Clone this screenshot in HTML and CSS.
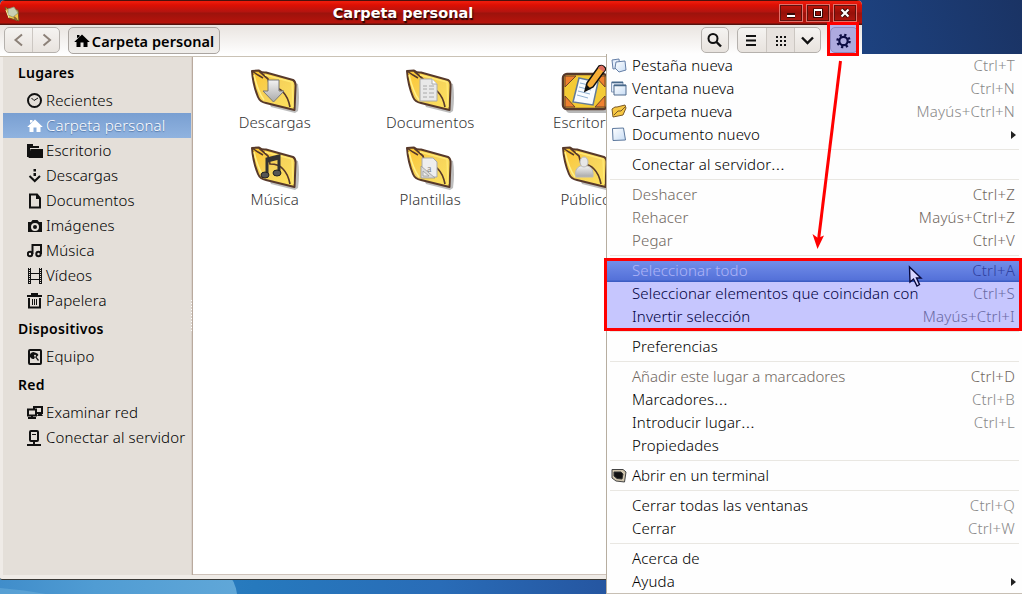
FILE: index.html
```
<!DOCTYPE html>
<html lang="es">
<head>
<meta charset="utf-8">
<title>Carpeta personal</title>
<link rel="stylesheet" href="styles.css">
</head>
<body>
<svg class="defs" width="0" height="0" aria-hidden="true">
  <defs>
    <linearGradient id="gold" x1="0" y1="0" x2="1" y2="1"><stop offset="0" stop-color="#ffc62c"/><stop offset=".5" stop-color="#f6d35b"/><stop offset="1" stop-color="#ffe45c"/></linearGradient>
    <linearGradient id="silver" x1="0" y1="0" x2="0" y2="1"><stop offset="0" stop-color="#f3f3f3"/><stop offset="1" stop-color="#a9a9a9"/></linearGradient>
    <linearGradient id="paper" x1="0" y1="0" x2="1" y2="1"><stop offset="0" stop-color="#fff"/><stop offset="1" stop-color="#c7dcf4"/></linearGradient>
    <symbol id="folder" viewBox="0 0 50 46">
      <path d="M6 5L14 4L48 15Q50 27 48 42L45 44L21 38z" fill="#999" opacity=".65"/>
      <path d="M2 2L9 1.500Q12 4 16 3.500L43 11Q46 12.500 45.500 18L44.500 41L16 34Q10 33 8 28Q3 16 2 2z" fill="url(#gold)" stroke="#57392a" stroke-width="2" stroke-linejoin="round"/>
      <path d="M2 2L8 6L13 9" fill="none" stroke="#57392a" stroke-width="1.500"/>
      <path d="M9 2L18 10L20 18Q29 18 33 23Q38 28 40 38" fill="none" stroke="#57392a" stroke-width="1.700"/>
      <path d="M4 6Q8 23 14 31" fill="none" stroke="#fff08a" stroke-width="1.500"/>
      <path d="M15 6L42 13L43 38" fill="none" stroke="#ffe976" stroke-width="1.300"/>
    </symbol>
    <symbol id="home" viewBox="0 0 16 16"><path d="M8 1.500L15.800 9H13.500V14H9.500V9.500H6.500V14H2.500V9H.2z" fill="currentColor"/><path d="M3 5V2H5.500V4" fill="currentColor"/></symbol>
  </defs>
</svg>
<main class="desktop">
  <svg class="wallpaper" viewBox="0 0 1022 594" aria-hidden="true">
    <defs><linearGradient id="sky"><stop offset="0" stop-color="#3588c5"/><stop offset=".25" stop-color="#2679bd"/><stop offset=".43" stop-color="#296cb7"/><stop offset=".6" stop-color="#2555a0"/><stop offset="1" stop-color="#18356a"/></linearGradient>
    <linearGradient id="beam"><stop offset="0" stop-color="#408dca"/><stop offset=".4" stop-color="#509cd3"/><stop offset="1" stop-color="#60a7d8"/></linearGradient>
    <linearGradient id="top" gradientUnits="userSpaceOnUse" x1="860" y1="50" x2="1022" y2="0"><stop offset="0" stop-color="#1d4280"/><stop offset="1" stop-color="#1a3364"/></linearGradient></defs>
    <path d="M0 0H1022V594H0z" fill="url(#sky)"/><path d="M0 0H1022V60H0z" fill="url(#top)"/>
    <path d="M0 575H228Q235 580 237 594H0z" fill="url(#beam)"/><path d="M0 588Q25 590 46 594H0z" fill="#6eb2de" opacity=".5"/>
  </svg>
  <section class="window">
    <header class="titlebar">
      <svg class="app-icon" viewBox="0 0 16 16"><path d="M1 1L4 3L14 4L15 15L5 12z" fill="#f3ca4a" stroke="#725022"/><path d="M4 3L10 1L14 7L9 11L4 9z" fill="#c9d0b3" stroke="#88936e" stroke-width=".7"/><path d="M10 11L13 14" stroke="#8b6735" stroke-width="2"/><path d="M2 4L5 12" stroke="#fff4a0"/></svg>
      <h1 class="title">Carpeta personal</h1>
      <div class="window-buttons">
        <button class="wm"><svg viewBox="0 0 22 18"><path d="M7 11.500H15" stroke="#350806" stroke-width="5"/><path d="M7 12H15" stroke="#fff" stroke-width="2"/></svg></button>
        <button class="wm"><svg viewBox="0 0 22 18"><path d="M7.500 6H14.500V12.500H7.500z" fill="none" stroke="#350806" stroke-width="3"/><path d="M7.500 5.500H14.500V12.500H7.500z" fill="none" stroke="#fff"/><path d="M7 6H15" stroke="#fff" stroke-width="2"/></svg></button>
        <button class="wm"><svg viewBox="0 0 22 18"><path d="M7.500 5.500L14.500 12.500M14.500 5.500L7.500 12.500" stroke="#350806" stroke-width="4"/><path d="M7.500 5.500L14.500 12.500M14.500 5.500L7.500 12.500" stroke="#fff" stroke-width="2.200"/></svg></button>
      </div>
    </header>
    <nav class="toolbar">
      <div class="group nav-group"><button class="tool"><svg viewBox="0 0 27 24"><path d="M17 6.500L10.500 12L17 17.500" class="muted"/></svg></button><button class="tool"><svg viewBox="0 0 27 24"><path d="M10.500 6.500L17 12L10.500 17.500" class="muted"/></svg></button></div>
      <button class="path"><svg class="path-icon"><use href="#home"/></svg><span>Carpeta personal</span></button>
      <div class="group search"><button class="tool"><svg viewBox="0 0 28 24"><circle cx="12" cy="10.500" r="4.500" class="line"/><path d="M15.500 14L20 18.500" class="line thick"/></svg></button></div>
      <div class="group views"><button class="tool"><svg viewBox="0 0 28 24"><path d="M8 8H18M8 12.500H18M8 17H18" class="line"/></svg></button><button class="tool pressed"><svg viewBox="0 0 28 24"><path d="M9 9H19M9 13H19M9 17H19" class="dots"/></svg></button><button class="tool"><svg viewBox="0 0 28 24"><path d="M7 9.500L12.500 15L18 9.500" class="line thick"/></svg></button></div>
      <div class="group settings"><button class="tool"><svg viewBox="0 0 28 24"><circle cx="13.500" cy="13" r="6" fill="none" stroke="#111" stroke-width="2.500" stroke-dasharray="2.200 2.512"/><circle cx="13.500" cy="13" r="4.200" fill="none" stroke="#111" stroke-width="2.200"/></svg></button></div>
    </nav>
    <div class="body">
      <aside class="sidebar">
        <h2>Lugares</h2>
        <a class="place"><svg viewBox="0 0 16 16"><circle cx="7.500" cy="7.500" r="6.500" class="line"/><path d="M4.500 5L7 7.500L11 5" class="line thin"/></svg><span>Recientes</span></a>
        <a class="place active"><svg viewBox="0 0 16 16"><use href="#home"/></svg><span>Carpeta personal</span></a>
        <a class="place"><svg viewBox="0 0 16 16"><path d="M0 1H6V3H12V5H3V14H0z" fill="#111"/><path d="M3.500 6H16V15H1.500z" fill="#111"/></svg><span>Escritorio</span></a>
        <a class="place"><svg viewBox="0 0 16 16"><path d="M6.500 1H9V3.500H6.500zM6.500 5H9V8H6.500z" fill="#111"/><path d="M2.500 8L7.750 13L13 8" class="line"/></svg><span>Descargas</span></a>
        <a class="place"><svg viewBox="0 0 16 16"><path d="M3 1.500H10L13 5V14.500H3z" class="line"/><path d="M9 1V6H14" fill="#111"/></svg><span>Documentos</span></a>
        <a class="place"><svg viewBox="0 0 16 16"><path fill-rule="evenodd" d="M1 4H4L5.500 2H10.500L12 4H15V14H1zM8 5A4 4 0 1 0 8 13A4 4 0 1 0 8 5z" fill="#111"/><circle cx="8" cy="9" r="2" fill="#111"/></svg><span>Imágenes</span></a>
        <a class="place"><svg viewBox="0 0 16 16"><circle cx="3" cy="11" r="2.200" class="line"/><circle cx="11.500" cy="11" r="2.200" class="line"/><path d="M5.500 11V2H14V11" class="line"/></svg><span>Música</span></a>
        <a class="place"><svg viewBox="0 0 16 16"><path d="M2.500 0V16M13.500 0V16" class="film"/><path d="M2.500 0V16M13.500 0V16" class="holes"/><path d="M4 5.500H12M4 11.500H12" stroke="#111"/></svg><span>Vídeos</span></a>
        <a class="place"><svg viewBox="0 0 16 16"><path d="M0 3H15M4 1H11M2 5V14.500H13V5" class="line"/><path d="M5.500 6V12M7.500 6V12M9.500 6V12" stroke="#111"/></svg><span>Papelera</span></a>
        <h2>Dispositivos</h2>
        <a class="place"><svg viewBox="0 0 16 16"><rect x="2" y="1" width="12" height="14" rx="1" class="line"/><path d="M8 3.500A3.500 3.500 0 1 0 7 10L8 8L11 12L12 11L9.500 8L11.500 6Q11 4 8 3.500z" fill="#111"/><circle cx="8" cy="6.700" r="1" fill="#e4dfd9"/></svg><span>Equipo</span></a>
        <h2>Red</h2>
        <a class="place"><svg viewBox="0 0 16 16"><path d="M1 4.500H9V10.500H1zM5 11V14M1 13H9M7 4V2H15V8H10" class="line"/><path d="M10 11H16L14 8H12z" fill="#111"/></svg><span>Examinar red</span></a>
        <a class="place"><svg viewBox="0 0 16 16"><rect x="3" y="1" width="8" height="10" rx="1" class="line"/><path d="M7 11V15M0 15H14" class="line"/><path d="M5 4.500H9" stroke="#111"/></svg><span>Conectar al servidor</span></a>
      </aside>
      <div class="grip"></div>
      <section class="files">
        <figure class="file"><svg viewBox="0 0 50 46"><use href="#folder"/><path d="M18 11H29V22H34L23.500 33L13 22H18z" fill="url(#silver)" stroke="#777"/></svg><figcaption>Descargas</figcaption></figure>
        <figure class="file"><svg viewBox="0 0 50 46"><use href="#folder"/><path d="M15 10H27L32 15V32H15z" fill="#e9e9e9" stroke="#aaa"/><path d="M27 10V15H32" fill="#fff" stroke="#aaa"/><path d="M18 17H22M24 17H29M18 20H22M24 20H29M18 24H22M24 24H29M18 28H22M24 28H29" stroke="#aaa"/></svg><figcaption>Documentos</figcaption></figure>
        <figure class="file"><svg viewBox="0 0 50 46"><rect x="5" y="9" width="44" height="35" rx="4" fill="#999" opacity=".7"/><rect x="2" y="5" width="44" height="35" rx="4" fill="#f4cb35" stroke="#57392a" stroke-width="2.500"/><path d="M4 7H15L4 18zM44 7H34L44 18zM4 38H14L4 27zM44 38H34L44 27z" fill="#ef812e" stroke="#70452b"/><path d="M18 9L37 13L32 36L12 33z" fill="#f9fcff" stroke="#647b96" stroke-width="1.500"/><path d="M19 14L32 17M18 18L30 21M17 22L29 25M16 26L27 29" stroke="#8caed0"/><path d="M26 14L38-3Q42-5 45 0L32 18L24 22z" fill="#f7ae37" stroke="#111" stroke-width="1.500"/><path d="M37-1L39-3Q42-5 44 0L43 3z" fill="#de6c60"/><path d="M24 22L29 19L26 16z" fill="#111"/></svg><figcaption>Escritorio</figcaption></figure>
        <figure class="file"><svg viewBox="0 0 50 46"><use href="#folder"/><path d="M17 29V13L29 10V27" fill="none" stroke="#333" stroke-width="3"/><path d="M17 15L29 12" stroke="#333" stroke-width="3"/><ellipse cx="15" cy="29" rx="4" ry="3" fill="#555" stroke="#222"/><ellipse cx="27" cy="27" rx="4" ry="3" fill="#555" stroke="#222"/></svg><figcaption>Música</figcaption></figure>
        <figure class="file"><svg viewBox="0 0 50 46"><use href="#folder"/><path d="M17 12H28L32 16V31H17z" fill="#eee" stroke="#aaa"/><text x="22" y="26" class="template-letter">a</text><path d="M16 20L30 32H16zM18 25L24 30H18z" fill="#d9d9d9" stroke="#999" stroke-width=".8" fill-rule="evenodd"/></svg><figcaption>Plantillas</figcaption></figure>
        <figure class="file"><svg viewBox="0 0 50 46"><use href="#folder"/><path d="M19 20H27Q33 22 32 31H15Q13 23 19 20z" fill="url(#silver)" stroke="#bbb"/><ellipse cx="23" cy="16" rx="4" ry="5" fill="#e7e7e7" stroke="#bbb"/></svg><figcaption>Público</figcaption></figure>
      </section>
    </div>
  </section>

  <section class="menu">
    <div class="row"><svg viewBox="0 0 16 16"><path d="M1 2L8 1L9 10L2 11z" fill="#e4edfa" stroke="#657fa7"/><path d="M5 4L14 3L15 12L8 14L4 10z" fill="url(#paper)" stroke="#657fa7"/></svg><span>Pestaña nueva</span><kbd>Ctrl+T</kbd></div>
    <div class="row"><svg viewBox="0 0 16 16"><path d="M.5 1H12V11H.5z" fill="#e4edfa" stroke="#879bb9"/><path d="M3 4H15V14H3z" fill="url(#paper)" stroke="#536c8e"/><path d="M1 1.500H12M3 4.500H15" stroke="#476889" stroke-width="1.500"/></svg><span>Ventana nueva</span><kbd>Ctrl+N</kbd></div>
    <div class="row"><svg viewBox="0 0 16 16"><path d="M1 5L4 3L6 3L14 1L15 4L12 11L2 13z" fill="#f6c742" stroke="#795828" stroke-linejoin="round"/><path d="M3 11L7 7L10 7L14 3" fill="none" stroke="#795828"/></svg><span>Carpeta nueva</span><kbd>Mayús+Ctrl+N</kbd></div>
    <div class="row"><svg viewBox="0 0 16 16"><path d="M1.500 1.500L12.500 1L14.500 13L2 13.500z" fill="url(#paper)" stroke="#5c789d" stroke-linejoin="round"/></svg><span>Documento nuevo</span><b class="submenu"></b></div>
    <hr>
    <div class="row"><span>Conectar al servidor<i class="dots-text">…</i></span></div>
    <hr>
    <div class="row disabled"><span>Deshacer</span><kbd>Ctrl+Z</kbd></div>
    <div class="row disabled"><span>Rehacer</span><kbd>Mayús+Ctrl+Z</kbd></div>
    <div class="row disabled"><span>Pegar</span><kbd>Ctrl+V</kbd></div>
    <hr>
    <div class="row selected"><span>Seleccionar todo</span><kbd>Ctrl+A</kbd></div>
    <div class="row"><span>Seleccionar elementos que coincidan con</span><kbd>Ctrl+S</kbd></div>
    <div class="row"><span>Invertir selección</span><kbd>Mayús+Ctrl+I</kbd></div>
    <hr>
    <div class="row"><span>Preferencias</span></div>
    <hr>
    <div class="row disabled"><span class="snug">Añadir este lugar a marcadores</span><kbd>Ctrl+D</kbd></div>
    <div class="row"><span>Marcadores<i class="dots-text">…</i></span><kbd>Ctrl+B</kbd></div>
    <div class="row"><span>Introducir lugar<i class="dots-text">…</i></span><kbd>Ctrl+L</kbd></div>
    <div class="row"><span>Propiedades</span></div>
    <hr>
    <div class="row"><svg viewBox="0 0 16 16"><path d="M1 1.500L12 1.500L15 4L13.500 14L5 13L1 10z" fill="#d0c5ad" stroke="#444"/><path d="M3 4L10 4L12 6L11 11L6 10.500L3 8z" fill="#111" stroke="#333"/></svg><span class="snug">Abrir en un terminal</span></div>
    <hr>
    <div class="row"><span>Cerrar todas las ventanas</span><kbd>Ctrl+Q</kbd></div>
    <div class="row"><span>Cerrar</span><kbd>Ctrl+W</kbd></div>
    <hr>
    <div class="row"><span>Acerca de</span></div>
    <div class="row"><span>Ayuda</span><b class="submenu"></b></div>
  </section>
  <div class="marker gear-marker"></div>
  <div class="marker menu-marker"></div>
  <svg class="annotations" viewBox="0 0 1022 594" aria-hidden="true"><path d="M840.500 61L818.500 240" stroke="red" stroke-width="3"/><path d="M812.500 234L818 238L824 235.500L817.500 249z" fill="red"/><path d="M909.500 267L910 282L913.500 279L917 286L919.500 284.500L916.500 278H921z" fill="#d8d5ff" stroke="#08083c" stroke-width="1.400"/></svg>
</main>
</body>
</html>
```

FILE: styles.css
```
* { box-sizing: border-box; }
body { margin: 0; overflow: hidden; font: 300 15px/23px "Noto Sans", "Open Sans", sans-serif; letter-spacing: .14px; color: #000; }
button { border: 0; padding: 0; background: none; font: inherit; color: inherit; display: flex; align-items: center; justify-content: center; }
svg { flex: none; }
.defs, .wallpaper, .annotations { position: absolute; }
.desktop { position: relative; width: 1022px; height: 594px; overflow: hidden; }
.wallpaper { top: 0; left: 0; width: 1022px; height: 594px; }
.window { position: relative; display: flex; flex-direction: column; width: 862px; height: 580px; background: #efebe7; border-bottom: 1px solid #3a3936; border-radius: 5px 5px 2px 2px; overflow: hidden; }

.titlebar { height: 25px; flex: none; display: flex; align-items: center; padding: 0 5px 0 4px; background: linear-gradient(#4a110d 0 1px, #ed1b0b 1px 2px, #dc1004 5px, #b31410 12px, #9c130c 13px, #b8130b 23px, #54120d 24px); }
.app-icon { width: 16px; height: 16px; margin-top: 2px; }
.title { flex: 1; margin: 0; padding-left: 7px; text-align: center; font: bold 14.5px/22px "DejaVu Sans", sans-serif; letter-spacing: 0; color: #fff; text-shadow: 1px 2px 1px #250605; }
.window-buttons { display: flex; gap: 3px; }
.wm { width: 24px; height: 18px; border: 1px solid #e2716a; box-shadow: inset 0 0 0 1px #5e120d; background: linear-gradient(#c31409, #951009 50%, #af160e); }
.wm svg { width: 22px; height: 18px; }

.toolbar { height: 32px; flex: none; display: flex; align-items: flex-start; padding: 2px 4px 0; background: linear-gradient(#e9e4e0, #fff 30px); border-bottom: 1px solid #cac2b5; }
.group { display: flex; height: 26px; border: 1px solid #b5b1ad; border-radius: 5px; background: linear-gradient(#f5f3f1, #e8e3de); overflow: hidden; }
.tool { width: 28px; height: 24px; }
.tool + .tool { border-left: 1px solid #ccc7c2; }
.tool svg { width: 28px; height: 24px; }
.nav-group .tool { width: 27px; }
.nav-group .tool svg { width: 27px; }
.path { height: 27px; width: 152px; margin-left: 8px; padding-top: 1px; gap: 2px; border: 1px solid #aaa5a1; border-radius: 5px; background: linear-gradient(#e3deda, #f0eeeb); font-weight: 600; font-size: 14.5px; letter-spacing: .05px; white-space: nowrap; }
.path-icon { width: 16px; height: 16px; }
.search { margin-left: auto; }
.search .tool { width: 26px; }
.views { margin-left: 8px; width: 84px; }
.pressed { background: #e7e2de; }
.settings { margin-left: 9px; width: 28px; background: #dedad7; }
.settings .tool { margin-left: -1px; }
.muted { fill: none; stroke: #8c8178; stroke-width: 2; }
.line { fill: none; stroke: #111; stroke-width: 2; }
.thick { stroke-width: 2.4; }
.thin { stroke-width: 1; }
.dots { stroke: #111; stroke-width: 2; stroke-dasharray: 2 2; }
.film { stroke: #111; stroke-width: 3; }
.holes { stroke: #e4dfd9; stroke-dasharray: 1 1; }

.body { flex: 1; display: flex; padding: 0 4px 4px 3px; min-height: 0; }
.sidebar { width: 188px; background: #e4dfd9; }
.sidebar h2 { margin: 0; height: 31px; padding: 0 0 0 15px; font-size: 14px; font-weight: 600; letter-spacing: .3px; line-height: 32px; }
.place { display: flex; align-items: center; height: 25px; padding-left: 24px; gap: 3px; white-space: nowrap; }
.place svg { width: 16px; height: 16px; }
.place.active { color: #fff; background: linear-gradient(#799fd2, #90b3df); text-shadow: 0 1px 1px #5274a5; }
.grip { width: 2px; background: repeating-linear-gradient(#fff 0 1px, transparent 1px 3px) 0 243px / 1px 32px no-repeat, linear-gradient(90deg, #d9d1ca 50%, #b9aa9e 50%); }
.files { flex: 1; background: #fff; border-bottom: 1px solid #cec3bb; display: grid; grid-template-columns: repeat(3, 155.500px); grid-auto-rows: 77px; padding-top: 12px; padding-left: 4px; overflow: hidden; align-content: start; }
.file { margin: 0; display: flex; flex-direction: column; align-items: center; color: #333; }
.file svg { width: 50px; height: 43px; overflow: visible; }
.file svg { height: 46px; margin-bottom: -3px; }
.file figcaption { line-height: 21px; }
.template-letter { font: 10px "Liberation Serif", serif; fill: #888; }

.menu { position: absolute; top: 54px; left: 606px; width: 416px; height: 540px; background: #fefefe; border-left: 1px solid #b7aea0; border-bottom: 1px solid #c7bfb4; }
.row { height: 23px; display: flex; align-items: center; position: relative; padding: 0 7px 0 4px; white-space: nowrap; }
.row svg { width: 16px; height: 16px; margin-right: 5px; }
.row span:first-child { margin-left: 21px; }
.row kbd { font: inherit; letter-spacing: .2px; margin-left: auto; color: #888; }
.snug { letter-spacing: 0; }
.dots-text { font-style: normal; letter-spacing: 0; display: inline-block; transform: scaleX(1.25); transform-origin: left; }
.menu hr { height: 1px; border: 0; margin: 3px 3px; background: #e9e7e2; }
.disabled, .disabled kbd { color: #70675f; }
.selected { background: linear-gradient(#97bae6, #6c91ce 21px, #4d77b3 22px); color: #dfe5f5; }
.selected kbd { color: #3e5383; }
.submenu { margin-left: auto; margin-right: -1px; border-left: 5px solid #222; border-top: 4px solid transparent; border-bottom: 4px solid transparent; }
.marker { position: absolute; border: 3px solid red; background: rgba(0, 0, 255, .22); }
.gear-marker { left: 827px; top: 22px; width: 32px; height: 34px; }
.menu-marker { left: 604px; top: 258px; width: 418px; height: 73px; }
.annotations { left: 0; top: 0; width: 1022px; height: 594px; pointer-events: none; }
```
